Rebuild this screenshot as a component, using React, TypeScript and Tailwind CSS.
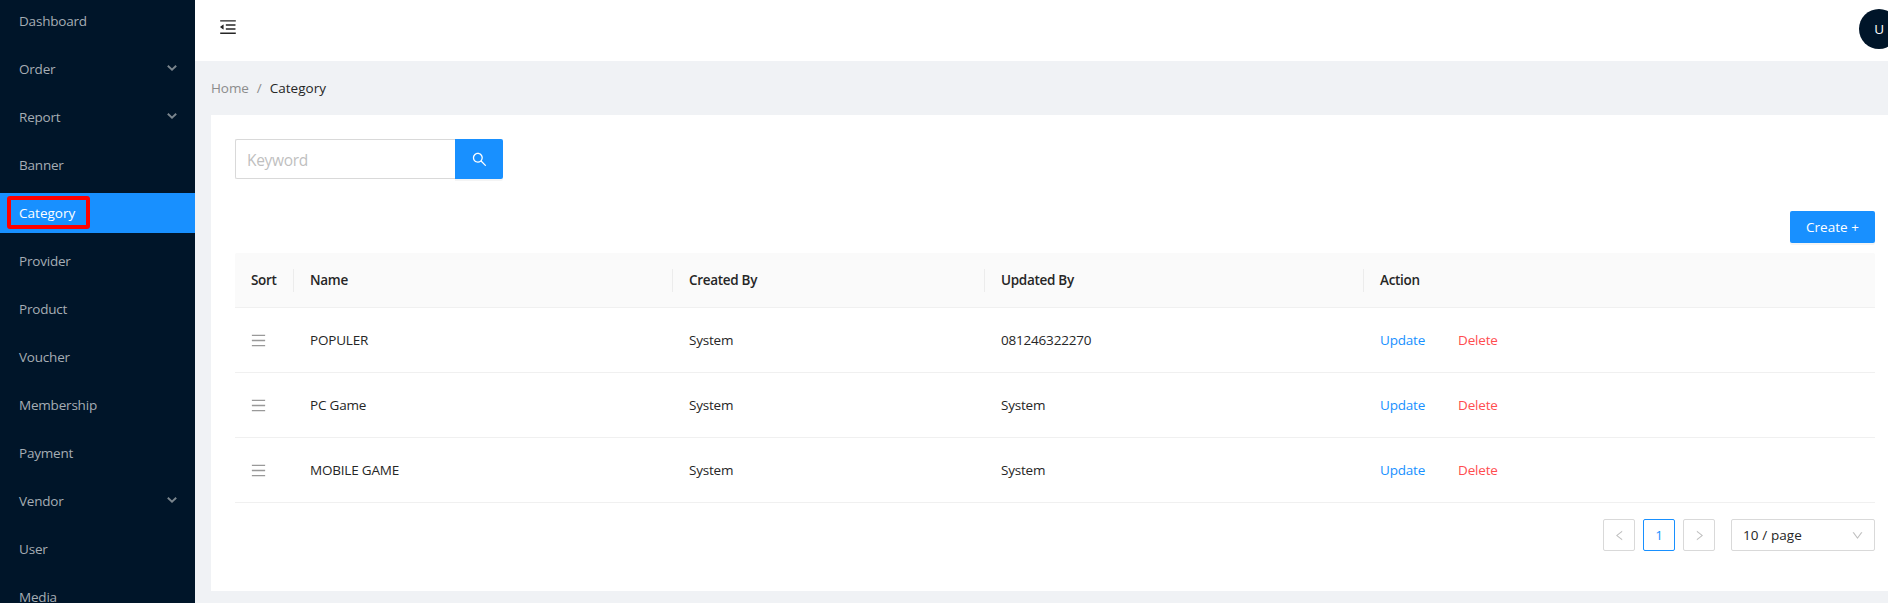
import {
  AiOutlineDown,
  AiOutlineLeft,
  AiOutlineMenu,
  AiOutlineMenuFold,
  AiOutlineRight,
  AiOutlineSearch,
} from "react-icons/ai";

type MenuEntry = { label: string; submenu?: boolean; active?: boolean };

const menu: MenuEntry[] = [
  { label: "Dashboard" },
  { label: "Order", submenu: true },
  { label: "Report", submenu: true },
  { label: "Banner" },
  { label: "Category", active: true },
  { label: "Provider" },
  { label: "Product" },
  { label: "Voucher" },
  { label: "Membership" },
  { label: "Payment" },
  { label: "Vendor", submenu: true },
  { label: "User" },
  { label: "Media" },
];

const rows = [
  { name: "POPULER", createdBy: "System", updatedBy: "081246322270" },
  { name: "PC Game", createdBy: "System", updatedBy: "System" },
  { name: "MOBILE GAME", createdBy: "System", updatedBy: "System" },
];

const columns = "grid grid-cols-[59px_379px_312px_379px_1fr]";

function Chevron() {
  return (
    <svg className="mb-[2px]" width="10" height="6" viewBox="0 0 10 6" fill="none" stroke="#7a858d" strokeWidth="1.9">
      <path d="M0.8 0.7 5 4.6 9.2 0.7" />
    </svg>
  );
}

function Sidebar() {
  return (
    <nav className="flex h-full w-[195px] shrink-0 flex-col gap-2 overflow-hidden bg-[#001529] pt-px">
      {menu.map((item) => (
        <div
          key={item.label}
          className={
            item.active
              ? "relative flex h-10 shrink-0 items-center bg-[#1890ff] pl-[19px] pr-[18px] tracking-[0.02px] text-white"
              : "flex h-10 shrink-0 items-center justify-between pl-[19px] pr-[18px] text-[#a6adb4]"
          }
        >
          <span>{item.label}</span>
          {item.submenu && <Chevron />}
          {item.active && (
            <span className="absolute left-[7px] top-[3px] h-[33px] w-[83px] rounded-[3px] border-4 border-[#ff0000]" />
          )}
        </div>
      ))}
    </nav>
  );
}

function HeaderCell({ label, last }: { label: string; last?: boolean }) {
  return (
    <div className="flex items-center justify-between pl-4">
      <span className="-mt-px">{label}</span>
      {!last && <span className="h-[23px] w-px bg-[#ececec]" />}
    </div>
  );
}

export default function App() {
  return (
    <div className="flex h-[603px] w-full overflow-hidden bg-[#f0f2f5] font-['Open_Sans','Noto_Sans',sans-serif] text-[13.5px] leading-[22px] tracking-[-0.2px] text-[#262626]">
      <Sidebar />
      <main className="flex min-w-0 flex-1 flex-col">
        <header className="flex h-[61px] shrink-0 justify-between overflow-hidden bg-white pl-[23px]">
          <AiOutlineMenuFold className="mt-[17px] size-5" />
          <div className="-mr-[11px] mt-[9px] flex size-10 items-center justify-center rounded-full bg-[#001529] text-white">
            U
          </div>
        </header>
        <div className="flex h-[54px] shrink-0 items-center gap-2 pl-4 tracking-[-0.08px]">
          <span className="text-[#8c8c8c]">Home</span>
          <span className="text-[#8c8c8c]">/</span>
          <span className="tracking-[0.02px]">Category</span>
        </div>
        <section className="ml-4 flex h-[476px] flex-col bg-white pl-6 pr-[13px] pt-6">
          <div className="flex h-10">
            <div className="flex w-[220px] items-center rounded-l-[2px] border border-r-0 border-[#d9d9d9] pl-[11px] pt-[2px] text-[15.5px] tracking-[-0.3px] text-[#bfbfbf]">
              Keyword
            </div>
            <button className="flex w-12 items-center justify-center rounded-r-[2px] bg-[#1890ff] text-white shadow-[0_2px_0_rgba(0,0,0,0.045)]">
              <AiOutlineSearch className="size-[17px]" />
            </button>
          </div>
          <div className="mt-8 flex justify-end">
            <button className="h-8 w-[85px] rounded-[2px] bg-[#1890ff] tracking-[0.05px] text-white shadow-[0_2px_0_rgba(0,0,0,0.045)]">
              Create +
            </button>
          </div>
          <div className="mt-[10px]">
            <div className={`${columns} h-[55px] rounded-t-[2px] border-b border-[#f0f0f0] bg-[#fafafa] font-semibold tracking-[-0.3px]`}>
              <HeaderCell label="Sort" />
              <HeaderCell label="Name" />
              <HeaderCell label="Created By" />
              <HeaderCell label="Updated By" />
              <HeaderCell label="Action" last />
            </div>
            {rows.map((row) => (
              <div key={row.name} className={`${columns} h-[65px] items-center border-b border-[#f0f0f0]`}>
                <AiOutlineMenu className="ml-[15px] size-[17px] text-[#999999]" />
                <span className="pl-4">{row.name}</span>
                <span className="pl-4">{row.createdBy}</span>
                <span className="pl-4">{row.updatedBy}</span>
                <span className="flex gap-[33px] pl-4">
                  <span className="text-[#1890ff]">Update</span>
                  <span className="text-[#ff4d4f]">Delete</span>
                </span>
              </div>
            ))}
          </div>
          <div className="mt-4 flex justify-end gap-2">
            <span className="flex size-8 items-center justify-center rounded-[2px] border border-[#d9d9d9] text-[#bfbfbf]">
              <AiOutlineLeft className="size-[13px]" />
            </span>
            <span className="flex size-8 items-center justify-center rounded-[2px] border border-[#1890ff] font-medium text-[#1890ff]">
              1
            </span>
            <span className="flex size-8 items-center justify-center rounded-[2px] border border-[#d9d9d9] text-[#bfbfbf]">
              <AiOutlineRight className="size-[13px]" />
            </span>
            <span className="ml-2 flex h-8 w-36 items-center justify-between rounded-[2px] border border-[#d9d9d9] pl-[11px] pr-[10px] tracking-[0.1px]">
              10 / page
              <AiOutlineDown className="size-[13px] text-[#bfbfbf]" />
            </span>
          </div>
        </section>
      </main>
    </div>
  );
}
